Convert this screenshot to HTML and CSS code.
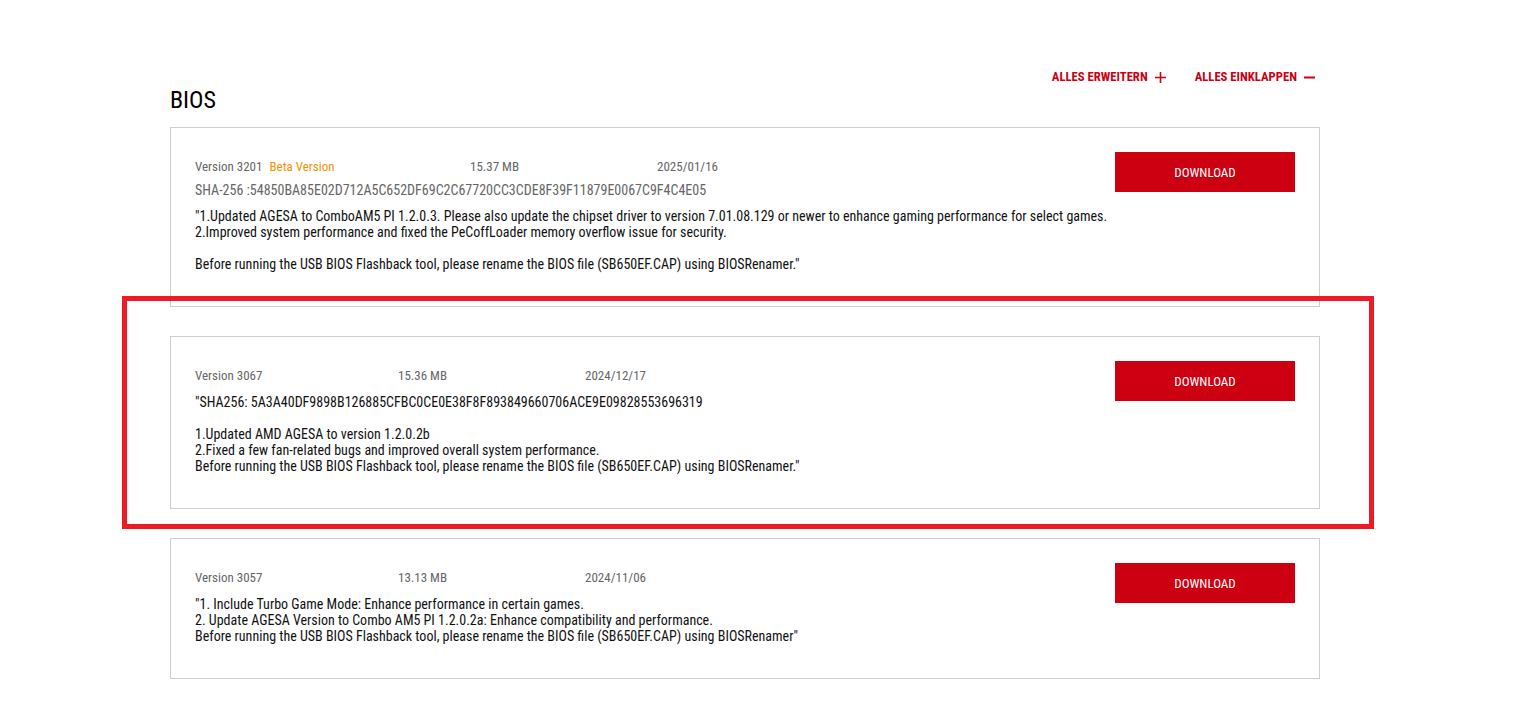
FILE: index.html
```html
<!DOCTYPE html>
<html lang="de">
<head>
<meta charset="utf-8">
<title>BIOS</title>
<link rel="stylesheet" href="styles.css">
</head>
<body>
<div class="page">
  <div class="toolbar">
    <a class="tool-link" href="#">ALLES ERWEITERN <span class="tool-icon">
      <svg width="11" height="11" viewBox="0 0 11 11"><path d="M5.5 0v11M0 5.5h11" stroke="currentColor" stroke-width="1.6"/></svg></span></a>
    <a class="tool-link" href="#">ALLES EINKLAPPEN <span class="tool-icon">
      <svg width="11" height="11" viewBox="0 0 11 11"><path d="M0 5.5h11" stroke="currentColor" stroke-width="2"/></svg></span></a>
  </div>
  <h2 class="section-title">BIOS</h2>

  <div class="list">
    <div class="card">
      <div class="card-body">
        <div class="meta">
          <span class="meta-version">Version 3201<span class="beta">Beta Version</span></span>
          <span class="meta-size">15.37 MB</span>
          <span class="meta-date">2025/01/16</span>
        </div>
        <div class="sha">SHA-256 :54850BA85E02D712A5C652DF69C2C67720CC3CDE8F39F11879E0067C9F4C4E05</div>
        <div class="desc">"1.Updated AGESA to ComboAM5 PI 1.2.0.3. Please also update the chipset driver to version 7.01.08.129 or newer to enhance gaming performance for select games.<br>2.Improved system performance and fixed the PeCoffLoader memory overflow issue for security.<br><br>Before running the USB BIOS Flashback tool, please rename the BIOS file (SB650EF.CAP) using BIOSRenamer."</div>
      </div>
      <a class="btn-download" href="#">DOWNLOAD</a>
    </div>

    <div class="card">
      <div class="card-body">
        <div class="meta">
          <span class="meta-version">Version 3067</span>
          <span class="meta-size">15.36 MB</span>
          <span class="meta-date">2024/12/17</span>
        </div>
        <div class="desc">"SHA256: 5A3A40DF9898B126885CFBC0CE0E38F8F893849660706ACE9E09828553696319<br><br>1.Updated AMD AGESA to version 1.2.0.2b<br>2.Fixed a few fan-related bugs and improved overall system performance.<br>Before running the USB BIOS Flashback tool, please rename the BIOS file (SB650EF.CAP) using BIOSRenamer."</div>
      </div>
      <a class="btn-download" href="#">DOWNLOAD</a>
    </div>

    <div class="card">
      <div class="card-body">
        <div class="meta">
          <span class="meta-version">Version 3057</span>
          <span class="meta-size">13.13 MB</span>
          <span class="meta-date">2024/11/06</span>
        </div>
        <div class="desc">"1. Include Turbo Game Mode: Enhance performance in certain games.<br>2. Update AGESA Version to Combo AM5 PI 1.2.0.2a: Enhance compatibility and performance.<br>Before running the USB BIOS Flashback tool, please rename the BIOS file (SB650EF.CAP) using BIOSRenamer"</div>
      </div>
      <a class="btn-download" href="#">DOWNLOAD</a>
    </div>
  </div>

  <div class="highlight" aria-hidden="true"></div>
</div>
</body>
</html>
```

FILE: styles.css
```css
* { box-sizing: border-box; }
html, body { margin: 0; padding: 0; background: #fff; }
body {
  font-family: "Roboto Condensed", Roboto, "Liberation Sans Narrow", sans-serif;
  color: #111;
}
.page {
  position: relative;
  width: 1522px;
  padding: 69px 0 0 170px;
}
.toolbar {
  width: 1150px;
  display: flex;
  justify-content: flex-end;
  gap: 29px;
  padding-right: 5px;
}
.tool-link {
  color: #cc0011;
  font-weight: 700;
  font-size: 12.7px;
  line-height: 16px;
  text-decoration: none;
  display: flex;
  align-items: center;
  gap: 7px;
}
.tool-icon { display: flex; }
.section-title {
  margin: 1px 0 0;
  font-size: 24px;
  line-height: 28px;
  font-weight: 400;
  color: #000;
}
.list {
  margin-top: 13px;
  width: 1150px;
  display: flex;
  flex-direction: column;
  gap: 29px;
}
.card {
  border: 1px solid #cfcfcf;
  padding: 24px 24px 34px 24px;
  display: flex;
  justify-content: space-between;
  align-items: flex-start;
}
.card-body { padding-top: 7px; }
.meta {
  display: flex;
  font-size: 13px;
  line-height: 16px;
  color: #666;
}
.meta-version { width: 203px; }
.meta-version:has(.beta) { width: 275px; }
.meta-size { width: 187px; }
.beta { color: #f39200; margin-left: 7px; }
.sha {
  margin-top: 7px;
  font-size: 14px;
  line-height: 16px;
  color: #666;
}
.desc {
  margin-top: 10px;
  font-size: 14px;
  line-height: 16px;
  color: #111;
}
.btn-download {
  flex: none;
  width: 180px;
  height: 40px;
  background: #cc0011;
  color: #fff;
  font-size: 13px;
  text-decoration: none;
  display: flex;
  align-items: center;
  justify-content: center;
}
.highlight {
  position: absolute;
  left: 122px;
  top: 296px;
  width: 1252px;
  height: 233px;
  border: 5px solid #ed1c24;
  pointer-events: none;
}
```
